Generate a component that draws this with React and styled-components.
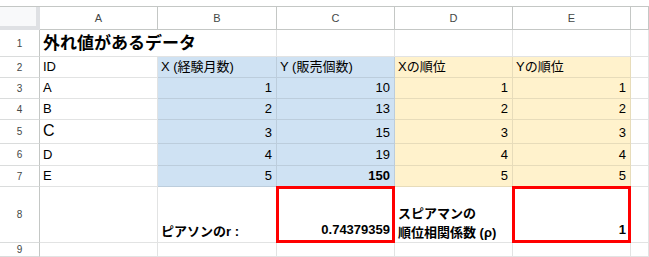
import styled, { createGlobalStyle, css } from 'styled-components';

const GlobalStyle = createGlobalStyle`
  html, body {
    margin: 0;
    padding: 0;
    background: #fff;
  }
  body {
    font-family: "Liberation Sans", Arial, "Noto Sans CJK JP", sans-serif;
    color: #000;
  }
`;

const fills = {
  white: { bg: '#ffffff', line: '#e2e3e3' },
  blue: { bg: '#cfe2f3', line: '#bccddc' },
  yellow: { bg: '#fff2cc', line: '#e7dcba' },
};

const Sheet = styled.div`
  display: grid;
  grid-template-columns: 40px 118px 119px 118px 118px 118px 1fr;
  grid-template-rows: 7px 23px 27px 21px 21px 21px 24px 22px 21px 56px 1fr;
  width: 649px;
  height: 257px;
  overflow: hidden;
`;

const TopStrip = styled.div`
  grid-column: 1 / -1;
  border-bottom: 1px solid #c4c7c5;
`;

const Corner = styled.div`
  background: #f8f9fa;
  border-right: 4px solid #dfe1e4;
  border-bottom: 4px solid #dfe1e4;
`;

const ColHead = styled.div`
  display: flex;
  align-items: center;
  justify-content: center;
  font-size: 11px;
  color: #444746;
  border-right: 1px solid #c4c7c5;
  border-bottom: 1px solid #c4c7c5;
`;

const RowHead = styled.div`
  display: flex;
  align-items: center;
  justify-content: center;
  font-size: 10px;
  color: #444746;
  border-right: 1px solid #c4c7c5;
  border-bottom: 1px solid #dadcdc;
`;

const Cell = styled.div`
  position: relative;
  display: flex;
  flex-direction: column;
  justify-content: flex-end;
  align-items: ${(p) => (p.$right ? 'flex-end' : 'flex-start')};
  padding: 0 4px ${(p) => (p.$pb !== undefined ? p.$pb : p.$mark ? 4 : 2)}px 3px;
  grid-column: span ${(p) => p.$span || 1};
  background: ${(p) => fills[p.$fill || 'white'].bg};
  border-right: 1px solid ${(p) => fills[p.$fill || 'white'].line};
  border-bottom: 1px solid ${(p) => fills[p.$fill || 'white'].line};
  font-size: ${(p) => p.$size || 13}px;
  font-weight: ${(p) => (p.$bold ? 700 : 400)};
  line-height: ${(p) => (p.$lh ? p.$lh : Math.round((p.$size || 13) * 1.25))}px;
  white-space: nowrap;

  ${(p) =>
    p.$mark &&
    css`
      &::after {
        content: '';
        position: absolute;
        top: -1px;
        left: -1px;
        right: -1px;
        bottom: -1px;
        border: 3px solid #ff0000;
        z-index: 1;
      }
    `}
`;

const columns = ['A', 'B', 'C', 'D', 'E', ''];

const dataRows = [
  { x: 1, y: 10, rx: 1, ry: 1, id: 'A' },
  { x: 2, y: 13, rx: 2, ry: 2, id: 'B' },
  { x: 3, y: 15, rx: 3, ry: 3, id: 'C', big: true },
  { x: 4, y: 19, rx: 4, ry: 4, id: 'D' },
  { x: 5, y: 150, rx: 5, ry: 5, id: 'E', boldY: true },
];

export default function App() {
  return (
    <>
      <GlobalStyle />
      <Sheet>
        <TopStrip />

        <Corner />
        {columns.map((c, i) => (
          <ColHead key={i}>{c}</ColHead>
        ))}

        <RowHead>1</RowHead>
        <Cell $span={2} $size={17} $bold>
          外れ値があるデータ
        </Cell>
        <Cell />
        <Cell />
        <Cell />
        <Cell />

        <RowHead>2</RowHead>
        <Cell>ID</Cell>
        <Cell $fill="blue">X (経験月数)</Cell>
        <Cell $fill="blue">Y (販売個数)</Cell>
        <Cell $fill="yellow">Xの順位</Cell>
        <Cell $fill="yellow">Yの順位</Cell>
        <Cell />

        {dataRows.map((r, i) => [
          <RowHead key={`h${i}`}>{i + 3}</RowHead>,
          <Cell key={`a${i}`} $size={r.big ? 16 : 13}>
            {r.id}
          </Cell>,
          <Cell key={`b${i}`} $fill="blue" $right>
            {r.x}
          </Cell>,
          <Cell key={`c${i}`} $fill="blue" $right $bold={r.boldY}>
            {r.y}
          </Cell>,
          <Cell key={`d${i}`} $fill="yellow" $right>
            {r.rx}
          </Cell>,
          <Cell key={`e${i}`} $fill="yellow" $right>
            {r.ry}
          </Cell>,
          <Cell key={`f${i}`} />,
        ])}

        <RowHead>8</RowHead>
        <Cell />
        <Cell $bold>ピアソンのr :</Cell>
        <Cell $bold $right $mark>
          0.74379359
        </Cell>
        <Cell $bold $lh={19} $pb={0}>
          <span>スピアマンの</span>
          <span>順位相関係数 (ρ)</span>
        </Cell>
        <Cell $bold $right $mark>
          1
        </Cell>
        <Cell />

        <RowHead>9</RowHead>
        <Cell />
        <Cell />
        <Cell />
        <Cell />
        <Cell />
        <Cell />
      </Sheet>
    </>
  );
}
